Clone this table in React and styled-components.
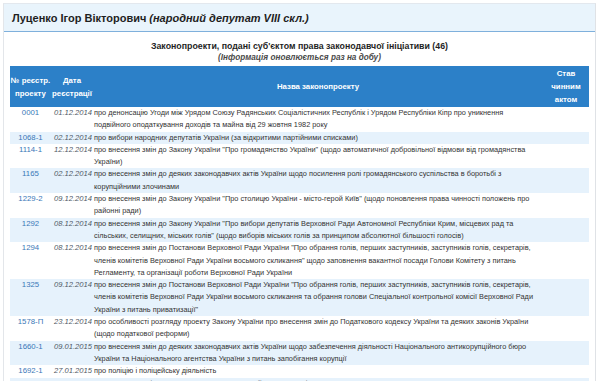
import React from 'react';
import styled, { createGlobalStyle } from 'styled-components';

const GlobalStyle = createGlobalStyle`
    html, body {
        margin: 0;
        padding: 0;
        background: #ffffff;
        font-family: "Liberation Sans", Arial, sans-serif;
    }
`;

const Page = styled.div`
    padding: 3px 4px 0 3px;
`;

const Panel = styled.div`
    border-left: 1px solid #e3e6ea;
    border-right: 1px solid #dfe2e6;
    border-top: 1px solid #e3e8ee;
    background: #ffffff;
`;

const PanelHeader = styled.div`
    display: flex;
    align-items: center;
    height: 27px;
    padding-left: 8px;
    background: #e9f4fc;
    border-bottom: 1px solid #7fb0dc;
    font-size: 11px;
    font-weight: bold;
    color: #1f1f1f;
`;

const Role = styled.span`
    font-style: italic;
    margin-left: 3px;
`;

const PanelBody = styled.div`
    padding: 8px 6px 0 6px;
`;

const Caption = styled.div`
    text-align: center;
    font-size: 8.8px;
    font-weight: bold;
    color: #1f1f1f;
    line-height: 12px;
`;

const Note = styled.div`
    text-align: center;
    font-size: 8.2px;
    font-weight: bold;
    font-style: italic;
    color: #4a4a4a;
    line-height: 12px;
    margin-bottom: 2px;
`;

const Table = styled.table`
    width: 100%;
    border-collapse: collapse;
    table-layout: fixed;
    font-size: 7.35px;
`;

const Th = styled.th`
    background: #2c80c8;
    color: #ffffff;
    font-weight: bold;
    font-size: 7.8px;
    line-height: 13px;
    height: 41px;
    padding: 0;
    white-space: nowrap;
    text-align: center;
    vertical-align: middle;
`;

const Row = styled.tr`
    background: ${p => (p.$shade ? '#e6f2fc' : '#ffffff')};
`;

const Td = styled.td`
    padding: 0 2px;
    line-height: 12.3px;
    vertical-align: top;
    color: #333333;
`;

const NumCell = styled(Td)`
    text-align: center;
    color: #3a78b8;
    font-size: 7.8px;
`;

const DateCell = styled(Td)`
    font-style: italic;
    color: #505a66;
    font-size: 7.6px;
    padding: 0 1px;
    text-align: right;
`;

const TextCell = styled(Td)`
    padding: 0 4px 0 1px;
`;

const bills = [
    ['0001', '01.12.2014', 'про денонсацію Угоди між Урядом Союзу Радянських Соціалістичних Республік і Урядом Республіки Кіпр про уникнення подвійного оподаткування доходів та майна від 29 жовтня 1982 року'],
    ['1068-1', '02.12.2014', 'про вибори народних депутатів України (за відкритими партійними списками)'],
    ['1114-1', '12.12.2014', 'про внесення змін до Закону України "Про громадянство України" (щодо автоматичної добровільної відмови від громадянства України)'],
    ['1165', '02.12.2014', 'про внесення змін до деяких законодавчих актів України щодо посилення ролі громадянського суспільства в боротьбі з корупційними злочинами'],
    ['1229-2', '09.12.2014', 'про внесення змін до Закону України "Про столицю України - місто-герой Київ" (щодо поновлення права чинності положень про районні ради)'],
    ['1292', '08.12.2014', 'про внесення змін до Закону України "Про вибори депутатів Верховної Ради Автономної Республіки Крим, місцевих рад та сільських, селищних, міських голів" (щодо виборів міських голів за принципом абсолютної більшості голосів)'],
    ['1294', '08.12.2014', 'про внесення змін до Постанови Верховної Ради України "Про обрання голів, перших заступників, заступників голів, секретарів, членів комітетів Верховної Ради України восьмого скликання" щодо заповнення вакантної посади Голови Комітету з питань Регламенту, та організації роботи Верховної Ради України'],
    ['1325', '09.12.2014', 'про внесення змін до Постанови Верховної Ради України "Про обрання голів, перших заступників, заступників голів, секретарів, членів комітетів Верховної Ради України восьмого скликання та обрання голови Спеціальної контрольної комісії Верховної Ради України з питань приватизації"'],
    ['1578-П', '23.12.2014', 'про особливості розгляду проекту Закону України про внесення змін до Податкового кодексу України та деяких законів України (щодо податкової реформи)'],
    ['1660-1', '09.01.2015', 'про внесення змін до деяких законодавчих актів України щодо забезпечення діяльності Національного антикорупційного бюро України та Національного агентства України з питань запобігання корупції'],
    ['1692-1', '27.01.2015', 'про поліцію і поліцейську діяльність'],
    ['1697', '27.01.2015', 'про внесення змін до Закону України "Про запобігання корупції"'],
];

export default function App() {
    return (
        <Page>
            <GlobalStyle />
            <Panel>
                <PanelHeader>
                    Луценко Ігор Вікторович
                    <Role>(народний депутат VIII скл.)</Role>
                </PanelHeader>
                <PanelBody>
                    <Caption>Законопроекти, подані суб'єктом права законодавчої ініціативи (46)</Caption>
                    <Note>(Інформація оновлюється раз на добу)</Note>
                    <Table>
                        <colgroup>
                            <col style={{ width: '41px' }} />
                            <col style={{ width: '42px' }} />
                            <col />
                            <col style={{ width: '46px' }} />
                        </colgroup>
                        <thead>
                            <tr>
                                <Th>№ реєстр.<br />проекту</Th>
                                <Th>Дата<br />реєстрації</Th>
                                <Th>Назва законопроекту</Th>
                                <Th>Став<br />чинним<br />актом</Th>
                            </tr>
                        </thead>
                        <tbody>
                            {bills.map(([num, date, title], i) => (
                                <Row key={num} $shade={i % 2 === 1}>
                                    <NumCell>{num}</NumCell>
                                    <DateCell>{date}</DateCell>
                                    <TextCell>{title}</TextCell>
                                    <Td />
                                </Row>
                            ))}
                        </tbody>
                    </Table>
                </PanelBody>
            </Panel>
        </Page>
    );
}
